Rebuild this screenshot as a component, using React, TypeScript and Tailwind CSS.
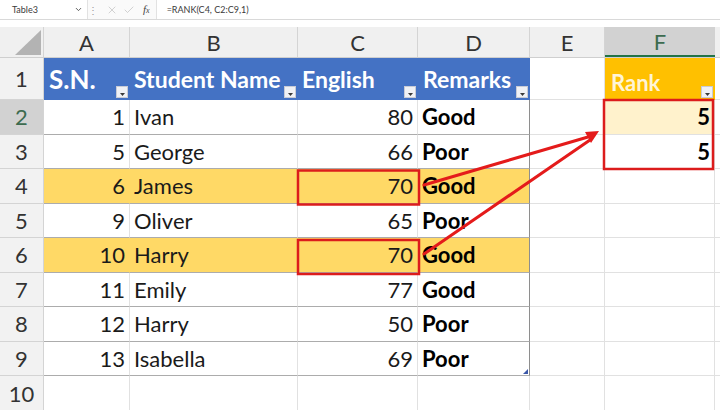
import { Check, ChevronDown, X } from 'lucide-react';

type Row = { n: number; header: string; sn: string; name: string; eng: string; rem: string; hl: boolean; rank?: string; rankBg?: boolean };

const rows: Row[] = [
    { n: 2, header: 'sel', sn: '1', name: 'Ivan', eng: '80', rem: 'Good', hl: false, rank: '5', rankBg: true },
    { n: 3, header: '', sn: '5', name: 'George', eng: '66', rem: 'Poor', hl: false, rank: '5' },
    { n: 4, header: '', sn: '6', name: 'James', eng: '70', rem: 'Good', hl: true },
    { n: 5, header: '', sn: '9', name: 'Oliver', eng: '65', rem: 'Poor', hl: false },
    { n: 6, header: '', sn: '10', name: 'Harry', eng: '70', rem: 'Good', hl: true },
    { n: 7, header: '', sn: '11', name: 'Emily', eng: '77', rem: 'Good', hl: false },
    { n: 8, header: '', sn: '12', name: 'Harry', eng: '50', rem: 'Poor', hl: false },
    { n: 9, header: '', sn: '13', name: 'Isabella', eng: '69', rem: 'Poor', hl: false },
];

function FilterBtn() {
    return (
        <span className="absolute right-[2px] bottom-[2px] w-[12px] h-[12px] bg-[#f0f1f5] border border-[#c8cbd6] flex items-end justify-center pb-[1px]">
            <svg width="5" height="3" viewBox="0 0 5 3"><path d="M0 0h5L2.5 3z" fill="#3a3a3a" /></svg>
        </span>
    );
}

export default function App() {
    return (
        <div className="relative w-[720px] h-[410px] overflow-hidden bg-white font-[Lato,sans-serif] flex flex-col">
            {/* formula bar */}
            <div className="h-[20px] shrink-0 flex items-center text-[9px] text-[#3a3a3a] border-b border-[#d9d9d9] bg-[#fafafa]">
                <div className="w-[88px] h-full flex items-center justify-between pl-[12px] pr-[4px] bg-white border-r border-[#e2e2e2]">
                    <span>Table3</span>
                    <ChevronDown size={9} strokeWidth={2.5} className="text-[#555]" />
                </div>
                <div className="w-[10px] flex justify-center text-[#999] text-[10px] leading-none">⋮</div>
                <X size={12} strokeWidth={1.2} className="ml-[8px] text-[#b5b5b5]" />
                <Check size={12} strokeWidth={1.2} className="ml-[5px] text-[#b5b5b5]" />
                <span className="ml-[8px] font-['Liberation_Serif',serif] italic text-[11px] text-[#444]">f<span className="text-[8px]">x</span></span>
                <div className="ml-[6px] h-full border-l border-[#e2e2e2] bg-white flex-1 flex items-center pl-[10px]">=RANK(C4, C2:C9,1)</div>
            </div>
            <div className="h-[7px] shrink-0" />

            {/* column headers */}
            <div className="h-[31px] shrink-0 flex text-[22px] text-[#333] bg-[#f0f0f0] border-b border-[#cfcfcf]">
                <div className="w-[44px] shrink-0 relative border-r border-[#d4d4d4]">
                    <svg className="absolute left-[15px] top-[3px]" width="26" height="25" viewBox="0 0 26 25"><path d="M26 0V25H0z" fill="#b3b3b3" /></svg>
                </div>
                <div className="w-[86px] shrink-0 flex items-center justify-center border-r border-[#d4d4d4]">A</div>
                <div className="w-[168px] shrink-0 flex items-center justify-center border-r border-[#d4d4d4]">B</div>
                <div className="w-[120px] shrink-0 flex items-center justify-center border-r border-[#d4d4d4]">C</div>
                <div className="w-[112px] shrink-0 flex items-center justify-center border-r border-[#d4d4d4]">D</div>
                <div className="w-[75px] shrink-0 flex items-center justify-center border-r border-[#d4d4d4]">E</div>
                <div className="w-[110px] shrink-0 flex items-center justify-center bg-[#d2d2d2] text-[#3d6b4f] border-b-2 border-[#217346]">F</div>
                <div className="flex-1" />
            </div>

            {/* row 1: table header */}
            <div className="h-[42px] shrink-0 flex font-bold text-white">
                <div className="w-[44px] shrink-0 bg-[#f2f2f2] border-r border-b border-[#d4d4d4] flex items-center justify-center text-[22px] text-[#333] font-normal">1</div>
                <div className="w-[86px] shrink-0 relative bg-[#4472c4] flex items-center pl-[5px] text-[26px]">S.N.<FilterBtn /></div>
                <div className="w-[168px] shrink-0 relative bg-[#4472c4] flex items-center pl-[4px] text-[23px]">Student Name<FilterBtn /></div>
                <div className="w-[120px] shrink-0 relative bg-[#4472c4] flex items-center pl-[4px] text-[23px]">English<FilterBtn /></div>
                <div className="w-[112px] shrink-0 relative bg-[#4472c4] flex items-center pl-[5px] text-[23px]">Remarks<FilterBtn /></div>
                <div className="w-[75px] shrink-0 border-r border-b border-[#e1e1e1]" />
                <div className="w-[110px] shrink-0 relative bg-[#ffc000] flex items-start pt-[8px] pl-[6px] text-[22px] text-[#fff4d6]">Rank<FilterBtn /></div>
                <div className="flex-1 border-b border-[#e1e1e1]" />
            </div>

            {/* data rows */}
            {rows.map((r) => (
                <div key={r.n} className="h-[34.5px] shrink-0 flex text-[22px] text-[#1a1a1a]">
                    <div className={`w-[44px] shrink-0 border-r border-b border-[#d4d4d4] flex items-center justify-center text-[22px] ${r.header === 'sel' ? 'bg-[#d2d2d2] text-[#3d6b4f]' : 'bg-[#f2f2f2] text-[#333]'}`}>{r.n}</div>
                    <div className={`w-[86px] shrink-0 flex items-center justify-end pr-[4px] border-r border-b border-r-[#e2e2e2] border-b-[#acacac] ${r.hl ? 'bg-[#ffd966] border-r-[#ffd966]' : 'bg-white'}`}>{r.sn}</div>
                    <div className={`w-[168px] shrink-0 flex items-center pl-[4px] border-r border-b border-r-[#e2e2e2] border-b-[#acacac] ${r.hl ? 'bg-[#ffd966] border-r-[#ffd966]' : 'bg-white'}`}>{r.name}</div>
                    <div className={`w-[120px] shrink-0 flex items-center justify-end pr-[4px] border-r border-b border-r-[#e2e2e2] border-b-[#acacac] ${r.hl ? 'bg-[#ffd966] border-r-[#ffd966]' : 'bg-white'}`}>{r.eng}</div>
                    <div className={`w-[112px] shrink-0 relative flex items-center pl-[4px] font-bold text-black border-r border-b border-r-[#8e8e8e] border-b-[#acacac] ${r.hl ? 'bg-[#ffd966]' : 'bg-white'}`}>
                        {r.rem}
                        {r.n === 9 && (
                            <svg className="absolute right-[1px] bottom-[1px]" width="5" height="5" viewBox="0 0 5 5"><path d="M5 0V5H0z" fill="#3a57a8" /></svg>
                        )}
                    </div>
                    <div className="w-[75px] shrink-0 border-r border-b border-[#e1e1e1]" />
                    <div className={`w-[110px] shrink-0 flex items-center justify-end pr-[4px] font-bold text-black border-r border-b border-[#e1e1e1] ${r.rankBg ? 'bg-[#fff2cc]' : 'bg-white'}`}>{r.rank}</div>
                    <div className="flex-1 border-b border-[#e1e1e1]" />
                </div>
            ))}

            {/* row 10 */}
            <div className="flex-1 flex">
                <div className="w-[44px] shrink-0 bg-[#f2f2f2] border-r border-[#d4d4d4] flex items-center justify-center text-[22px] text-[#333]">10</div>
                <div className="w-[86px] shrink-0 border-r border-[#e1e1e1]" />
                <div className="w-[168px] shrink-0 border-r border-[#e1e1e1]" />
                <div className="w-[120px] shrink-0 border-r border-[#e1e1e1]" />
                <div className="w-[112px] shrink-0 border-r border-[#e1e1e1]" />
                <div className="w-[75px] shrink-0 border-r border-[#e1e1e1]" />
                <div className="w-[110px] shrink-0 border-r border-[#e1e1e1]" />
                <div className="flex-1" />
            </div>

            {/* annotations */}
            <svg className="absolute inset-0 pointer-events-none" width="720" height="410" viewBox="0 0 720 410">
                <g fill="none" stroke="#dc1c1c" strokeWidth="2.5">
                    <rect x="298" y="170.5" width="121" height="34" />
                    <rect x="298" y="240" width="121" height="34" />
                    <rect x="604" y="100" width="109" height="69" />
                </g>
                <g stroke="#e41b1b" strokeWidth="3" strokeLinecap="round">
                    <line x1="424" y1="185" x2="588" y2="137" />
                    <line x1="424" y1="254" x2="590" y2="140" />
                </g>
                <path d="M599 131L585 132L591 143z" fill="#e41b1b" />
            </svg>
        </div>
    );
}
